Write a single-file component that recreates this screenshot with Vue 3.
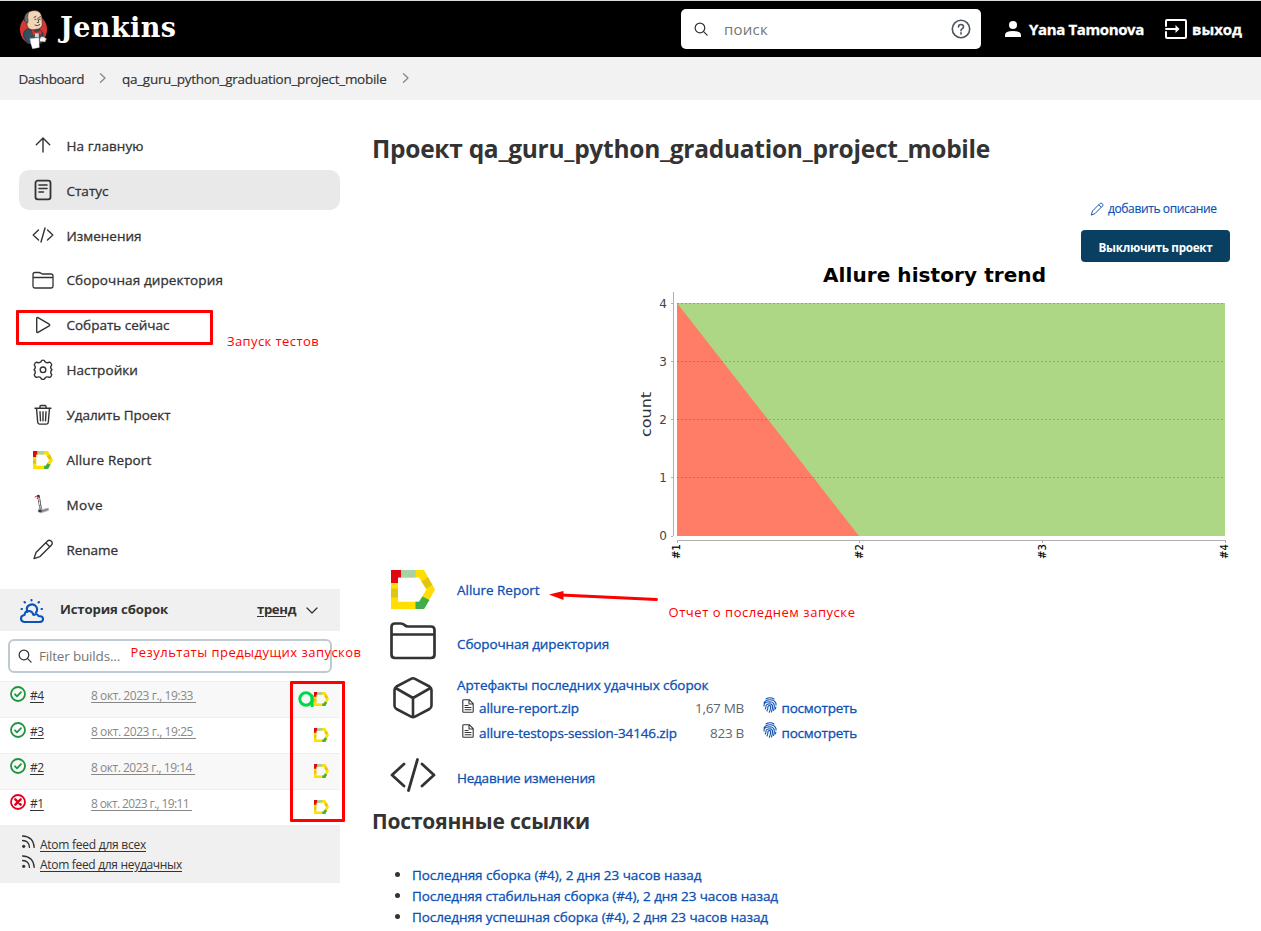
<script setup>
import { h } from 'vue'

// Spreads letters so that a label takes exactly the given width.
const vFit = {
  mounted(el, { value }) {
    const w = el.getBoundingClientRect().width
    el.style.letterSpacing = (value - w) / el.textContent.length + 'px'
  },
}

const menu = [
  { icon: 'up', label: 'На главную', w: 77 },
  { icon: 'doc', label: 'Статус', w: 42, active: true },
  { icon: 'code', label: 'Изменения', w: 75 },
  { icon: 'folder', label: 'Сборочная директория', w: 156.5 },
  { icon: 'play', label: 'Собрать сейчас', w: 103 },
  { icon: 'gear', label: 'Настройки', w: 71.5 },
  { icon: 'trash', label: 'Удалить Проект', w: 104 },
  { icon: 'allure', label: 'Allure Report', w: 85 },
  { icon: 'move', label: 'Move', w: 36.5 },
  { icon: 'pencil', label: 'Rename', w: 51.5 },
]
const builds = [
  { n: '#4', ok: true, date: '8 окт. 2023 г., 19:33', w: 102, testops: true },
  { n: '#3', ok: true, date: '8 окт. 2023 г., 19:25', w: 102 },
  { n: '#2', ok: true, date: '8 окт. 2023 г., 19:14', w: 101 },
  { n: '#1', ok: false, date: '8 окт. 2023 г., 19:11', w: 98 },
]
const feeds = [
  { label: 'Atom feed для всех', w: 106 },
  { label: 'Atom feed для неудачных', w: 142 },
]
const files = [
  { name: 'allure-report.zip', w: 100, size: '1,67 MB', sw: 49 },
  { name: 'allure-testops-session-34146.zip', w: 198, size: '823 B', sw: 34 },
]
const links = [
  { label: 'Последняя сборка (#4), 2 дня 23 часов назад', w: 289.5 },
  { label: 'Последняя стабильная сборка (#4), 2 дня 23 часов назад', w: 366 },
  { label: 'Последняя успешная сборка (#4), 2 дня 23 часов назад', w: 356 },
]

const AllureLogo = () =>
  h('svg', { viewBox: '0 0 44 39', preserveAspectRatio: 'none' }, [
    h('path', { fill: '#ffde00', d: 'M0 0H33L44 19.5 33 39H0ZM7 7.5V31.7H28L35.5 19.5 28 7.5Z', 'fill-rule': 'evenodd' }),
    h('path', { fill: '#e30613', d: 'M0 0H10V7.5H7V13H0Z' }),
    h('path', { fill: '#a6d3a0', d: 'M10 0H24.500V7.500H10Z' }),
    h('path', { fill: '#e0c512', d: 'M0 18.500H7V27.500H0ZM30.500 11.500L37 7 41.300 15 35 18.500Z' }),
    h('path', { fill: '#3fae49', d: 'M24.500 31.700H28L31.500 26.500 38.500 30 33 39H24.500Z' }),
  ])
</script>

<template>
  <div class="page">
    <header class="top">
      <svg class="butler" viewBox="0 0 30 41">
        <ellipse cx="15" cy="20.500" rx="14" ry="15.500" fill="#d33833" />
        <path d="M5 22Q4 26 5 29L9 35H23L27 29 24 23Z" fill="#335061" />
        <path d="M6.500 10Q6 2 14 1Q22 0 23.500 7L24 13Q25 18 20 20L13 21Q8 19 8 14Z" fill="#f0d6b7" stroke="#231f20" stroke-width=".6" />
        <path d="M5.500 11Q5 4 11 1.500Q8 5 9.500 11L9 14Q7 14 5.500 11Z" fill="#6d6b6d" stroke="#231f20" stroke-width=".5" />
        <path d="M15.500 8l2-1M20.500 8l2-.7M16.500 10h1M21 10h1M19.500 9l1 4-1.500.3M16.500 16q2.500 1.500 5-.5" stroke="#231f20" fill="none" stroke-width=".8" />
        <path d="M8 20Q4 22 5 28L9 35H22L25 24 21 20 16 22Z" fill="#335061" stroke="#1d2b36" stroke-width=".6" />
        <path d="M13 20.500l5 3 5-2.500.5 5-5-1.500-4 2.500Z" fill="#d33833" stroke="#81221c" stroke-width=".4" />
        <path d="M16.500 24.500h4v4h-4z" fill="#cfd8df" />
        <path d="M11.500 30l9-1 .5 10-7 1.500q-2-5-2.500-10.500Z" fill="#fff" stroke="#c8c8c8" stroke-width=".4" />
        <path d="M21.500 30q1-3 4-2l3 2-1.500 3.500-5.500-.5Z" fill="#f7f1ea" stroke="#555" stroke-width=".5" />
      </svg>
      <b class="brand" v-fit="116.5">Jenkins</b>
      <div class="search">
        <svg class="mag" viewBox="0 0 16 16"><circle cx="6.800" cy="6.800" r="5.500" /><path d="M11 11l4 4" /></svg>
        <span class="ph" v-fit="44">поиск</span>
        <svg class="help" viewBox="0 0 20 20"><circle cx="10" cy="10" r="8.700" /><path d="M7.500 8Q7.500 5.500 10 5.500T12.500 7.800Q12.500 9.200 11 9.900 10 10.500 10 11.800" /><path d="M10 13.700v1.400" /></svg>
      </div>
      <svg class="user" viewBox="0 0 16 16"><circle cx="8" cy="4" r="4" /><path d="M0 16v-2q0-4 8-4t8 4v2z" /></svg>
      <b class="who" v-fit="115">Yana Tamonova</b>
      <svg class="exit" viewBox="0 0 22 20"><path d="M1 7V2Q1 1 2 1H20Q21 1 21 2V18Q21 19 20 19H2Q1 19 1 18V13M1 10H12" /><path d="M10.500 6L14.500 10l-4 4z" class="solid" /></svg>
      <b class="out" v-fit="50">выход</b>
    </header>

    <nav class="crumbs">
      <span v-fit="65.5">Dashboard</span>
      <svg viewBox="0 0 8 10"><path d="M1.500 .7L6 5 1.500 9.300" /></svg>
      <span v-fit="264.500">qa_guru_python_graduation_project_mobile</span>
      <svg viewBox="0 0 8 10"><path d="M1.500 .7L6 5 1.500 9.300" /></svg>
    </nav>

    <div class="body">
      <aside>
        <ul class="menu">
          <li v-for="m in menu" :key="m.label" :class="{ active: m.active }">
            <AllureLogo v-if="m.icon === 'allure'" class="allure-s" />
            <svg v-else class="ico" viewBox="0 0 22 22">
              <path v-if="m.icon === 'up'" d="M11 18V4.500M4.300 10.700L11 4l6.700 6.700" />
              <g v-else-if="m.icon === 'doc'"><rect x="3.500" y="1.700" width="15" height="18.600" rx="2.300" stroke-width="1.800" /><path d="M7 6h8M7 9.500h8M7 13h4.500" stroke-width="1.600" /></g>
              <path v-else-if="m.icon === 'code'" d="M6.500 6L1.200 11l5.300 5M15.500 6l5.300 5-5.300 5M13 4L9 18" />
              <path v-else-if="m.icon === 'folder'" d="M1 17V5.500Q1 3.500 3 3.500H7Q8 3.500 9 4.300T11 5H19Q21 5 21 7V17Q21 19 19 19H3Q1 19 1 17ZM1 8.500H21" stroke-width="1.300" />
              <path v-else-if="m.icon === 'play'" d="M4.700 4.500v13q0 1.500 1.300.8l11.200-6.500q1.100-.8 0-1.600L6 3.700q-1.300-.7-1.300.8Z" />
              <g v-else-if="m.icon === 'gear'" transform="translate(0 .8)"><path d="M9 3Q9.300 1.300 11 1.300T13 3Q14.500 4.400 16.400 3.700 18.200 3 19.200 4.700 20.200 6.300 18.900 7.500 18.200 9.500 20 11 18.200 12.500 18.900 14.400 20.200 15.700 19.200 17.300 18.200 19 16.400 18.300 14.500 17.700 13.200 19 12.800 20.700 11 20.700T8.800 19Q7.500 17.700 5.600 18.300 3.800 19 2.800 17.300 1.800 15.700 3.100 14.400 3.800 12.500 2 11 3.800 9.500 3.100 7.500 1.800 6.300 2.800 4.700 3.800 3 5.600 3.700 7.500 4.400 9 3Z" /><circle cx="11" cy="11" r="2.800" /></g>
              <g v-else-if="m.icon === 'trash'" transform="translate(0 .8)"><path d="M3 4.500H19M4.500 4.500L5.700 18.500Q5.800 20.300 7.500 20.300H14.500Q16.200 20.300 16.300 18.500L17.500 4.500M8 4.300V2.800Q8 1.700 9 1.700H13Q14 1.700 14 2.800V4.300M8 8L8.500 17M11 8V17M14 8L13.500 17" /></g>
              <g v-else-if="m.icon === 'move'"><path d="M3 4l3-1.500 1 2-2 1" stroke="#d8232a" stroke-width="1" /><path d="M6.500 3L8.500 15" stroke="#333" stroke-width="2.400" /><path d="M6.800 5l1.400 9" stroke="#eee" stroke-width="1.300" stroke-dasharray="2.500 1.500" /><path d="M6 18.500Q6.500 14 9.500 15l1 1.500 6-1.500v2.500l-8 2.500z" fill="#888" stroke="#bbb" stroke-width=".7" /><path d="M7 18h2" stroke="#222" /></g>
              <path v-else transform="translate(0 .6)" d="M2 20L4 14 15.300 2.700Q16.800 1.200 18.500 2L20 3.500Q20.800 5.200 19.300 6.700L8 18ZM14 4.500L17.500 8" />
            </svg>
            <span v-fit="m.w">{{ m.label }}</span>
          </li>
        </ul>

        <div class="hist-head">
          <svg class="weather" viewBox="0 0 24 24"><path d="M7.500 13Q5.500 8 9.500 6 14 4 16.500 8 18 11 16 13.500M4.500 16Q5 11.500 9.500 12 12.500 12.500 13.500 16 17 14 18.500 17 23 17 23 20T19 23H4.500Q1 22.500 1 19.500T4.500 16Z" /><path d="M11.500 1v.5M4.500 3l.5.500M19 3l-.5.500M1.500 10h.5M21.500 10h.5" /></svg>
          <b v-fit="108">История сборок</b>
          <b class="trend" v-fit="39">тренд</b>
          <svg class="chev" viewBox="0 0 12 8"><path d="M1 1l5 5 5-5" /></svg>
        </div>
        <div class="filter">
          <svg class="mag" viewBox="0 0 16 16"><circle cx="6.800" cy="6.800" r="5.500" /><path d="M11 11l4 4" /></svg>
          <span v-fit="81">Filter builds...</span>
        </div>
        <div v-for="b in builds" :key="b.n" class="build">
          <svg class="st" :class="{ bad: !b.ok }" viewBox="0 0 16 16"><circle cx="8" cy="8" r="7" /><path v-if="b.ok" d="M5 8.300l2 2 4-4.200" /><path v-else d="M5.300 5.300l5.400 5.400M10.700 5.300l-5.400 5.400" class="x" /></svg>
          <a class="num">{{ b.n }}</a>
          <a class="date"><span v-fit="b.w">{{ b.date }}</span>&nbsp;</a>
          <span class="marks">
            <svg v-if="b.testops" class="ops" viewBox="0 0 16 16"><circle cx="8" cy="8" r="6.200" /><path d="M14.200 5V15" /></svg>
            <AllureLogo class="allure-xs" />
          </span>
        </div>
        <div class="feeds">
          <div v-for="f in feeds" :key="f.label">
            <svg viewBox="0 0 13 13"><circle cx="1.700" cy="11.300" r="1.600" /><path d="M.5 5.500Q7 5.500 7.500 12.500M.5 1Q11.500 1.500 12.200 12.500" /></svg>
            <a v-fit="f.w">{{ f.label }}</a>
          </div>
        </div>
      </aside>

      <main>
        <h1><span v-fit="618">Проект qa_guru_python_graduation_project_mobile</span></h1>
        <div class="desc">
          <svg viewBox="0 0 22 22"><path d="M2 20L4 14 15.300 2.700Q16.800 1.200 18.500 2L20 3.500Q20.800 5.200 19.300 6.700L8 18ZM14 4.500L17.500 8" /></svg>
          <a v-fit="108.5">добавить описание</a>
        </div>
        <div class="actions"><button><span v-fit="114">Выключить проект</span></button></div>

        <svg class="chart" width="610" height="304" viewBox="630 262 610 304">
          <text x="823" y="282" class="title" textLength="223">Allure history trend</text>
          <path d="M677 303H1225V536H677Z" fill="#aed785" />
          <path d="M677 303L859 536H677Z" fill="#ff7d66" />
          <path d="M677 303.500H1225M677 361.500H1225M677 419.500H1225M677 477.500H1225" class="grid" />
          <path d="M673.500 292V536M671 303.500h2M671 361.500h2M671 419.500h2M671 477.500h2M671 536.500h2M677 540.500H1225.500M677.500 540v3M859.500 540v3M1042.500 540v3M1225.500 540v3" class="axis" />
          <g class="ticks">
            <text x="667" y="308">4</text><text x="667" y="366">3</text><text x="667" y="424">2</text><text x="667" y="482">1</text><text x="667" y="540">0</text>
          </g>
          <text transform="translate(651 437) rotate(-90)" class="count" textLength="45" lengthAdjust="spacingAndGlyphs">count</text>
          <g class="cats">
            <text transform="translate(680 559) rotate(-90)">#1</text><text transform="translate(863 559) rotate(-90)">#2</text>
            <text transform="translate(1046 559) rotate(-90)">#3</text><text transform="translate(1228 559) rotate(-90)">#4</text>
          </g>
        </svg>

        <div class="row r1"><AllureLogo class="allure-l" /><a v-fit="82.500">Allure Report</a></div>
        <div class="row r2">
          <svg class="big" viewBox="0 0 46 46"><path d="M1.500 36.500V9Q1.500 5.500 5 5.500H10.500Q13 5.500 14.500 7T18 8.500H41Q44.500 8.500 44.500 12V36.500Q44.500 40 41 40H5Q1.500 40 1.500 36.500ZM1.500 16.500H44.500" /></svg>
          <a v-fit="152">Сборочная директория</a>
        </div>
        <div class="row r3">
          <svg class="big" viewBox="0 0 46 46"><path d="M21 3.800Q23 2.800 25 3.800L39.500 11.500Q41.500 12.700 41.500 15V30.500Q41.500 32.800 39.500 34L25 41.700Q23 42.700 21 41.700L6.500 34Q4.500 32.800 4.500 30.500V15Q4.500 12.700 6.500 11.500ZM5.500 13L23 23 40.500 13M23 23V42" stroke-width="2.600" /></svg>
          <div class="arts">
            <a v-fit="251.500">Артефакты последних удачных сборок</a>
            <div v-for="f in files" :key="f.name" class="file">
              <svg class="page-i" viewBox="0 0 12 14"><path d="M.8 1.500Q.8.700 1.500.700H7.200L11.200 4.700V12.500Q11.200 13.300 10.400 13.300H1.600Q.8 13.300.8 12.500ZM7 .7V5H11M3 6.500h3M3 8.500h6M3 10.700h6" /></svg>
              <a class="fname"><span v-fit="f.w">{{ f.name }}</span></a>
              <span class="size"><span v-fit="f.sw">{{ f.size }}</span></span>
              <svg class="finger" viewBox="0 0 14 16"><path d="M3 2Q7-.5 11 2M1 6Q2.500 2.700 7 2.700T13 6.500V8M1 9V8Q1.500 4.700 7 4.700 11.300 5 11.300 9 11.300 12 10.500 13.500M2.300 12Q3 10.500 3 9 3.300 6.700 7 6.700 9.500 7 9.500 9.500 9.500 12.500 8.500 15M4 14Q5 11.500 5 9.500 5.300 8.500 7 8.500 8 9 7.500 11 7.300 13.500 6.300 15.300M12.800 10l-.3 2" /></svg>
              <a v-fit="75.5">посмотреть</a>
            </div>
          </div>
        </div>
        <div class="row r4">
          <svg class="big" viewBox="0 0 46 46"><path d="M14 12L2 23l12 11M32 12l12 11-12 11M27.500 7.500L18.500 38.500" stroke-width="2.800" /></svg>
          <a v-fit="138">Недавние изменения</a>
        </div>

        <h2><span v-fit="218">Постоянные ссылки</span></h2>
        <ul class="perma">
          <li v-for="l in links" :key="l.label"><a v-fit="l.w">{{ l.label }}</a></li>
        </ul>
      </main>
    </div>

    <div class="box box-run"></div>
    <div class="box box-res"></div>
    <span class="note n1" v-fit="92">Запуск тестов</span>
    <span class="note n2" v-fit="231">Результаты предыдущих запусков</span>
    <span class="note n3" v-fit="187">Отчет о последнем запуске</span>
    <svg class="arrow" viewBox="0 0 110 14"><path d="M12 5L107.500 9.500" stroke="#f00" stroke-width="3" stroke-linecap="round" /><path d="M0 4.500L14.500 1V10Z" fill="#f00" /></svg>
  </div>
</template>

<style>
body { background: #fff; overflow: hidden; }
</style>

<style scoped>
.page { position: relative; width: 1261px; height: 931px; overflow: hidden; font: 500 13.5px/18px "Open Sans", "Noto Sans", sans-serif; color: #333; }
svg { flex: none; fill: none; stroke-linecap: round; stroke-linejoin: round; }
span, a, b { display: inline-block; white-space: nowrap; }
ul { list-style: none; margin: 0; padding: 0; }
.menu span, .row a, .perma a, .desc a { -webkit-text-stroke: .3px currentColor; }
.top { display: flex; align-items: center; height: 57px; box-sizing: border-box; background: #000; border-top: 1px solid #d9dddb; color: #fff; padding-left: 19px; }
.butler { width: 29px; height: 41px; }
.brand { font: bold 27px/32px "DejaVu Serif", serif; margin: -3px 0 0 12px; width: max-content; }
.search { display: flex; align-items: center; width: 300px; height: 40px; box-sizing: border-box; background: #fff; border-radius: 5px; padding: 0 10px 0 13px; position: absolute; left: 681px; top: 9px; }
.mag { width: 14px; height: 14px; stroke: #333; stroke-width: 1.4; }
.ph { color: #757575; font-size: 15px; font-weight: 400; margin: 0 0 0 16px; }
.help { width: 20px; height: 20px; stroke: #4d545d; stroke-width: 1.6; margin-left: auto; }
.user { width: 16px; height: 16px; fill: #fff; margin-left: auto; }
.who { font-size: 15px; margin: 0 0 0 8px; font-weight: 700; -webkit-text-stroke: .3px #fff; }
.exit { width: 22px; height: 20px; stroke: #fff; stroke-width: 2; margin-left: 21px; }
.exit .solid { fill: #fff; stroke: none; }
.out { font-size: 15px; margin: 0 19px 0 5px; font-weight: 700; -webkit-text-stroke: .3px #fff; }
.crumbs { display: flex; align-items: center; height: 43px; background: #f2f2f2; padding-left: 18.500px; }
.crumbs span { margin-top: 1px; -webkit-text-stroke: .15px currentColor; }
.crumbs svg { width: 8px; height: 10px; stroke: #888; stroke-width: 1.3; margin: -2px 15px 0; }
.body { display: flex; height: 831px; }
aside { width: 340px; padding-top: 25px; box-sizing: border-box; }
.menu { display: flex; flex-direction: column; gap: 4.900px; padding-left: 19px; height: 464px; }
.menu li { display: flex; align-items: center; height: 40px; border-radius: 10px; padding-left: 13px; gap: 12.500px; }
.menu li span { margin-top: 1.600px; }
.menu .active { background: #e9e9e9; }
.ico { width: 22px; height: 22px; stroke: #333; stroke-width: 1.4; }
.allure-s { width: 20px; height: 18px; margin: 2px 1px 0 1px; }
.hist-head { display: flex; align-items: center; height: 42px; background: #f0f0f0; padding: 0 22px 0 20px; }
.hist-head b { font-size: 13.200px; font-weight: 700; margin-top: -2px; }
.weather { width: 24px; height: 24px; stroke: #0b53b8; stroke-width: 2.1; margin: 1px 16px 0 0; }
.hist-head .trend { margin-left: auto; text-decoration: underline; text-underline-offset: 2px; }
.chev { width: 12px; height: 8px; stroke: #333; stroke-width: 1.3; margin: 1px 0 0 10px; }
.filter { display: flex; align-items: center; width: 324px; height: 34px; box-sizing: border-box; border: 2px solid #bfcad0; border-radius: 6px; margin: 8px 8px 8px; padding-left: 8px; color: #757575; font-weight: 400; }
.filter span { margin-left: 7px; }
.build { display: flex; height: 36px; box-sizing: border-box; border-top: 1px solid #eee; padding: 5px 11px 0 10px; font-size: 12px; line-height: 17px; }
.build:nth-of-type(odd) { background: #f8f8f8; }
.build:nth-of-type(even) { background: #fff; }
.build a { text-decoration: underline; text-underline-offset: 2px; }
.st { width: 16px; height: 16px; stroke: #1e9640; stroke-width: 1.800; margin-top: -1px; }
.bad { stroke: #e6001f; }
.st .x { stroke-width: 2.400; }
.num { margin: 0 47px 0 4px; letter-spacing: -.4px; width: 14px; }
.build .date { color: #888; font-weight: 400; }
.build .date span { display: inline; }
.marks { display: flex; align-items: center; margin-left: auto; height: 18px; margin-top: 3px; }
.allure-xs { width: 15px; height: 14px; }
.ops { width: 16px; height: 16px; stroke: #00d84a; stroke-width: 3; }
.feeds { height: 58px; box-sizing: border-box; background: #f0f0f0; padding: 11px 0 0 22px; font-size: 12px; }
.feeds div { display: flex; height: 20px; }
.feeds svg { width: 13px; height: 13px; stroke: #333; stroke-width: 1.300; margin: -1px 5px 0 0; }
.feeds circle { fill: #333; stroke: none; }
.feeds a { text-decoration: underline; text-underline-offset: 2px; }
main { flex: 1; padding-left: 32px; box-sizing: border-box; }
h1 { margin: 0; padding-top: 33px; font-size: 24.500px; line-height: 32px; height: 66px; font-weight: 700; }
.desc { display: flex; justify-content: flex-end; align-items: center; height: 20px; padding-right: 44.500px; font-size: 12px; color: #0b50b4; }
.desc svg { width: 14px; height: 14px; stroke: #0b50b4; stroke-width: 1.500; margin: -1px 4px 0 0; }
.desc a { -webkit-text-stroke-width: .15px; }
.actions { display: flex; justify-content: flex-end; height: 32px; padding: 11px 31px 0 0; }
button { width: 149px; height: 32px; border: 0; padding: 2px 0 0; border-radius: 4px; background: #093f60; color: #fff; font: 700 11.700px/18px "Open Sans", sans-serif; }
.chart { display: block; width: 610px; height: 304px; margin-left: 258px; }
.title { font: bold 20px "DejaVu Sans", sans-serif; fill: #000; }
.grid { stroke: #000; stroke-opacity: .19; stroke-dasharray: 2 2; stroke-linecap: butt; }
.axis { stroke: #b0b0b0; stroke-linecap: butt; }
.ticks { font: 12px "DejaVu Sans", sans-serif; fill: #444; text-anchor: end; }
.count { font: 14px "DejaVu Sans", sans-serif; fill: #333; }
.cats { font: 10px "DejaVu Sans", sans-serif; fill: #000; stroke: #000; stroke-width: .15; }
.row { display: flex; align-items: center; gap: 21px; padding-left: 18px; color: #0b50b4; }
.r1 { height: 49px; }
.r2 { height: 52px; }
.r2 > a, .r4 > a { margin-top: 5px; }
.r3 { height: 85px; align-items: flex-start; }
.r4 { height: 46px; }
.allure-l { width: 44px; height: 39px; margin: -2px 1px 0 1px; }
.r1 > a { margin-top: -1px; }
.big { width: 46px; height: 46px; stroke: #333; stroke-width: 2.700; }
.r3 .big { margin-top: 8px; }
.arts { padding-top: 9px; }
.arts > a { display: block; height: 19px; width: max-content; }
.file { display: flex; align-items: center; height: 25px; padding-left: 5px; }
.page-i { width: 12px; height: 14px; stroke: #333; stroke-width: 1.100; margin: -4px 5px 0 0; }
.fname { width: 206px; }
.size { width: 59px; text-align: right; font-weight: 400; color: #5f6670; }
.finger { width: 14px; height: 16px; stroke: #0b50b4; stroke-width: 1.1; margin: -5px 4.500px 0 19px; }
h2 { margin: 0; padding-top: 9px; height: 57px; font-size: 21px; line-height: 28px; font-weight: 700; }
.perma li { display: flex; align-items: center; height: 21px; color: #0b50b4; }
.perma li::before { content: ""; width: 5px; height: 5px; border-radius: 50%; background: #333; margin: -1px 12px 0 23px; }
.box { position: absolute; box-sizing: border-box; border: 3px solid #f00; }
.box-run { left: 16px; top: 310px; width: 197px; height: 35px; border-radius: 1px; }
.box-res { left: 290px; top: 681px; width: 55px; height: 141px; border-radius: 1px; }
.note { position: absolute; color: #f00; font-size: 13px; font-weight: 400; }
.n1 { left: 227px; top: 332px; }
.n2 { left: 130.500px; top: 643px; }
.n3 { left: 668.500px; top: 603px; }
.arrow { position: absolute; left: 549px; top: 590px; width: 110px; height: 14px; }
</style>
